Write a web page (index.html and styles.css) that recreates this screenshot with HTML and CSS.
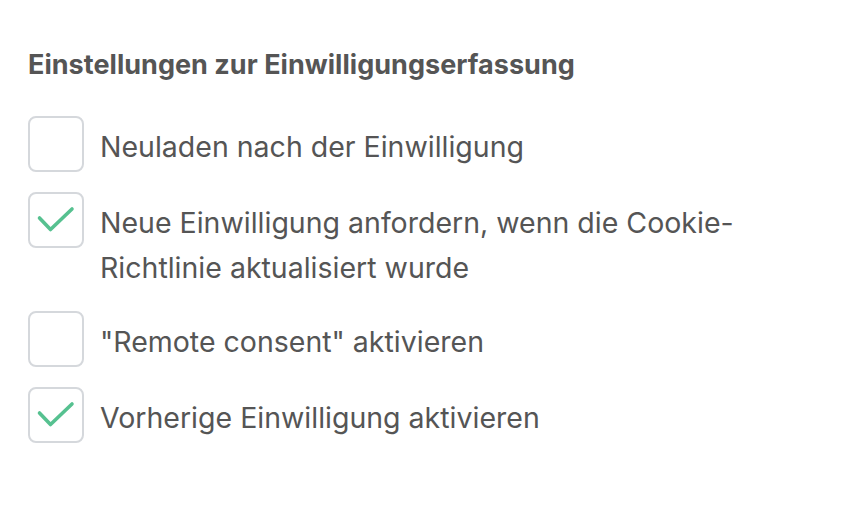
FILE: index.html
```html
<!DOCTYPE html>
<html lang="de">
<head>
<meta charset="utf-8">
<link rel="stylesheet" href="styles.css">
</head>
<body>
<div class="panel">
  <h2 class="title">Einstellungen zur Einwilligungserfassung</h2>
  <ul class="options">
    <li class="option">
      <span class="box"></span>
      <span class="label">Neuladen nach der Einwilligung</span>
    </li>
    <li class="option">
      <span class="box checked"><svg viewBox="0 0 56 56" class="tick"><path d="M11.5 26 L22.5 37.5 L44 17" /></svg></span>
      <span class="label">Neue Einwilligung anfordern, wenn die Cookie-<br>Richtlinie aktualisiert wurde</span>
    </li>
    <li class="option">
      <span class="box"></span>
      <span class="label">"Remote consent" aktivieren</span>
    </li>
    <li class="option">
      <span class="box checked"><svg viewBox="0 0 56 56" class="tick"><path d="M11.5 26 L22.5 37.5 L44 17" /></svg></span>
      <span class="label">Vorherige Einwilligung aktivieren</span>
    </li>
  </ul>
</div>
</body>
</html>
```

FILE: styles.css
```css
html, body {
  margin: 0;
  padding: 0;
  background: #ffffff;
}
body {
  font-family: Inter, "Noto Sans", sans-serif;
  color: #555555;
}
.panel {
  padding: 45px 28px 0 28px;
}
.title {
  margin: 0 0 31px 0;
  font-size: 27px;
  line-height: 40px;
  font-weight: 700;
  color: #555555;
  letter-spacing: 0.03px;
}
.options {
  list-style: none;
  margin: 0;
  padding: 0;
  display: flex;
  flex-direction: column;
  gap: 20px;
}
.option {
  display: flex;
  align-items: flex-start;
  gap: 16px;
}
.box {
  flex: 0 0 auto;
  box-sizing: border-box;
  width: 56px;
  height: 56px;
  border: 2px solid #d5d8dc;
  border-radius: 8px;
  background: #ffffff;
  position: relative;
}
.tick {
  position: absolute;
  left: -2px;
  top: -2px;
  width: 56px;
  height: 56px;
}
.tick path {
  fill: none;
  stroke: #56c190;
  stroke-width: 3.6;
  stroke-linecap: round;
  stroke-linejoin: round;
}
.label {
  padding: 8px 0 1px 0;
  font-size: 28.5px;
  line-height: 45px;
  color: #555555;
}
```
